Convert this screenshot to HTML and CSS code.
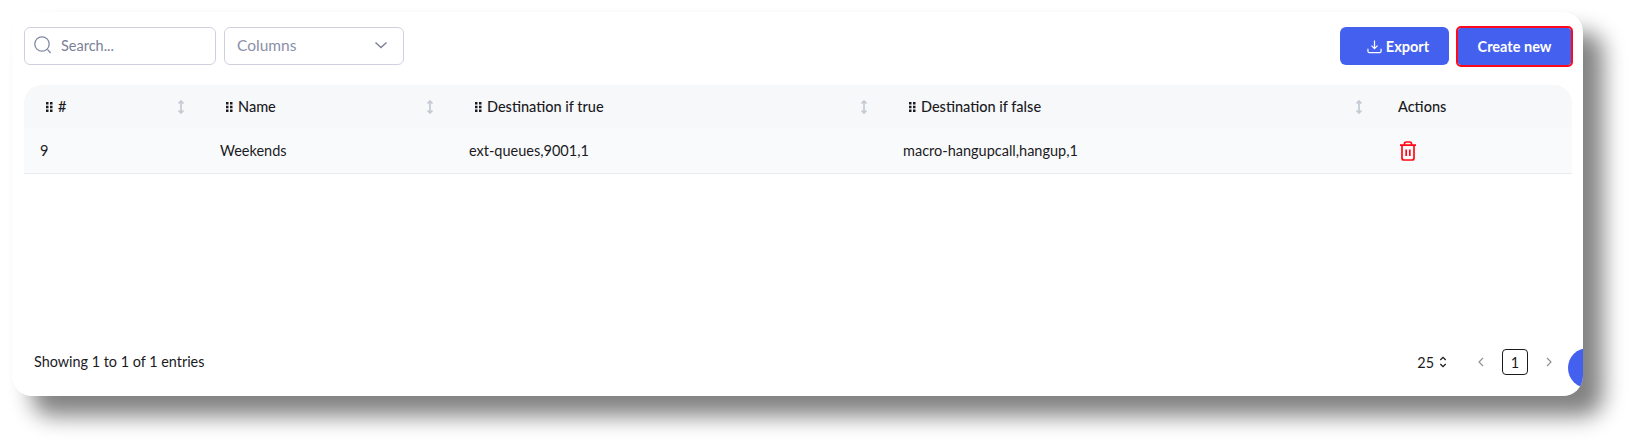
FILE: index.html
```html
<!DOCTYPE html>
<html lang="en">
<head>
<meta charset="utf-8">
<title>Time conditions</title>
<link rel="stylesheet" href="styles.css">
</head>
<body>
<main class="card">
  <div class="toolbar">
    <label class="search">
      <svg class="search-icon" viewBox="0 0 20 20" width="20" height="20"><circle cx="9" cy="9" r="7.2"/><path d="M14.4 14.4 17.6 18"/></svg>
      <span>Search...</span>
    </label>
    <div class="columns">
      <span>Columns</span>
      <svg viewBox="0 0 14 8" width="14" height="8"><path d="M1.5 1.5 7 6.5l5.5-5"/></svg>
    </div>
    <div class="spacer"></div>
    <button class="btn btn-export">
      <svg viewBox="0 0 16 16" width="15" height="15"><path d="M8 1.5v8.5M4.8 7 8 10.2 11.2 7M1 10.5V13a1.6 1.6 0 0 0 1.6 1.6h10.8A1.6 1.6 0 0 0 15 13v-2.5"/></svg>
      Export
    </button>
    <button class="btn btn-create">Create new</button>
  </div>

  <table class="table">
    <thead>
      <tr>
        <th class="col-id"><div class="th"><svg class="grip" viewBox="0 0 8 10" width="8" height="10"><use href="#dots"/></svg><span>#</span><svg class="sort" viewBox="0 0 8 14" width="8" height="14"><use href="#updown"/></svg></div></th>
        <th class="col-name"><div class="th"><svg class="grip" viewBox="0 0 8 10" width="8" height="10"><use href="#dots"/></svg><span>Name</span><svg class="sort" viewBox="0 0 8 14" width="8" height="14"><use href="#updown"/></svg></div></th>
        <th class="col-true"><div class="th"><svg class="grip" viewBox="0 0 8 10" width="8" height="10"><use href="#dots"/></svg><span>Destination if true</span><svg class="sort" viewBox="0 0 8 14" width="8" height="14"><use href="#updown"/></svg></div></th>
        <th class="col-false"><div class="th"><svg class="grip" viewBox="0 0 8 10" width="8" height="10"><use href="#dots"/></svg><span>Destination if false</span><svg class="sort" viewBox="0 0 8 14" width="8" height="14"><use href="#updown"/></svg></div></th>
        <th class="col-actions"><span>Actions</span></th>
      </tr>
    </thead>
    <tbody>
      <tr>
        <td>9</td>
        <td>Weekends</td>
        <td>ext-queues,9001,1</td>
        <td>macro-hangupcall,hangup,1</td>
        <td>
          <svg class="trash" viewBox="0 0 18 20" width="18" height="20"><path d="M1 4.2h16M5.5 4V2.6A1.6 1.6 0 0 1 7.1 1h3.8a1.6 1.6 0 0 1 1.6 1.6V4M3 4.5V17a2 2 0 0 0 2 2h8a2 2 0 0 0 2-2V4.5M7.2 8.5v6.5M10.8 8.5v6.5"/></svg>
        </td>
      </tr>
    </tbody>
  </table>

  <div class="footer">
    <span class="entries">Showing 1 to 1 of 1 entries</span>
    <div class="pager">
      <span class="size">25
        <svg viewBox="0 0 8 12" width="8" height="12"><path d="M1.3 4 4 1.4 6.7 4M1.3 8 4 10.6 6.7 8"/></svg>
      </span>
      <svg class="arrow" viewBox="0 0 6 10" width="6" height="10"><path d="M5 1 1 5l4 4"/></svg>
      <span class="page">1</span>
      <svg class="arrow" viewBox="0 0 6 10" width="6" height="10"><path d="M1 1l4 4-4 4"/></svg>
    </div>
  </div>
  <div class="fab"></div>
</main>

<svg class="defs" width="0" height="0" aria-hidden="true">
  <defs>
    <g id="dots" fill="currentColor">
      <rect x="1" y="0" width="2.5" height="2.5"/><rect x="5" y="0" width="2.5" height="2.5"/>
      <rect x="1" y="3.75" width="2.5" height="2.5"/><rect x="5" y="3.75" width="2.5" height="2.5"/>
      <rect x="1" y="7.5" width="2.5" height="2.5"/><rect x="5" y="7.5" width="2.5" height="2.5"/>
    </g>
    <path id="updown" d="M4 1v12M1.5 3.5 4 1l2.5 2.5M1.5 10.5 4 13l2.5-2.5" fill="none" stroke="currentColor" stroke-width="1.7"/>
  </defs>
</svg>
</body>
</html>
```
FILE: styles.css
```css
* { box-sizing: border-box; }

html, body { margin: 0; background: #fff; }

body {
  height: 448px;
  overflow: hidden;
  padding: 12px 52px 0 12px;
  font-family: "Lato", "Open Sans", sans-serif;
  font-size: 14.5px;
  color: #1b1b1f;
}

.card {
  position: relative;
  display: flex;
  flex-direction: column;
  width: 1571px;
  height: 384px;
  padding: 15px 12px 0 12px;
  overflow: hidden;
  background: #fff;
  border-radius: 20px;
  box-shadow: 20px 20px 22px #828282, 0 0 6px rgba(0, 0, 0, 0.015);
}

.toolbar {
  display: flex;
  align-items: center;
  height: 38px;
}

.search, .columns {
  display: flex;
  align-items: center;
  height: 38px;
  border: 1px solid #cfd2de;
  border-radius: 6px;
  color: #8a8fa8;
  padding-bottom: 2px;
}

.search { width: 192px; padding-left: 8px; gap: 8px; color: #7b8096; }
.search-icon { fill: none; stroke: #7f8ba5; stroke-width: 1.3; }

.columns {
  width: 180px;
  margin-left: 8px;
  padding-left: 12px;
  padding-right: 15px;
  justify-content: space-between;
  font-size: 15.5px;
}
.columns svg { fill: none; stroke: #7f8298; stroke-width: 1.5; }

.spacer { flex: 1; }

.btn {
  display: flex;
  align-items: center;
  justify-content: center;
  gap: 4px;
  height: 38px;
  border: 0;
  border-radius: 6px;
  background: #4361ee;
  color: #fff;
  font: 700 14.5px "Lato", sans-serif;
}
.btn svg { fill: none; stroke: #fff; stroke-width: 1.3; }
.btn-export { width: 109px; padding: 0 0 0 7px; }
.btn-create {
  width: 113px;
  height: 37px;
  margin-left: 9px;
  outline: 2px solid #ff0a1c;
  border-radius: 3px;
}

.table {
  width: 1548px;
  margin-top: 20px;
  border-collapse: separate;
  border-spacing: 0;
  table-layout: fixed;
}

.col-id { width: 180px; }
.col-name { width: 249px; }
.col-true { width: 434px; }
.col-false { width: 495px; }
.col-actions { width: 190px; }

th {
  height: 43px;
  padding: 0 16px;
  background: #f7f8fa;
  font-weight: 500;
  text-align: left;
}
th:first-child { border-top-left-radius: 18px; }
th:last-child { border-top-right-radius: 18px; }

.th { display: flex; align-items: center; gap: 5px; padding-left: 5px; }
.th span { flex: 1; }
.grip { color: #1b1b1f; flex: none; }
.sort { color: #c3cad3; flex: none; margin-right: 3px; }

td {
  height: 46px;
  padding: 0 16px;
  background: #f9fafb;
  border-bottom: 1px solid #e9ebee;
}

.trash { display: block; margin-left: 1px; fill: none; stroke: #ff0a16; stroke-width: 1.7; }

.footer {
  display: flex;
  align-items: center;
  justify-content: space-between;
  margin-top: auto;
  margin-bottom: 21px;
  padding-left: 10px;
  font-size: 14.4px;
}

.entries { padding-bottom: 2px; }

.pager { display: flex; align-items: center; margin-right: 19px; }
.size { display: flex; align-items: center; gap: 5px; margin-right: 31px; }
.size svg { fill: none; stroke: #1b1b1f; stroke-width: 1.3; }
.arrow { fill: none; stroke: #8f9298; stroke-width: 1.2; }
.page {
  display: flex;
  align-items: center;
  justify-content: center;
  width: 26px;
  height: 26px;
  margin: 0 18px;
  border: 1px solid #1b1b1f;
  border-radius: 4px;
}

.fab {
  position: absolute;
  left: 1556px;
  top: 336px;
  width: 40px;
  height: 40px;
  border-radius: 50%;
  background: #4361ee;
}

.defs { position: absolute; }
```
